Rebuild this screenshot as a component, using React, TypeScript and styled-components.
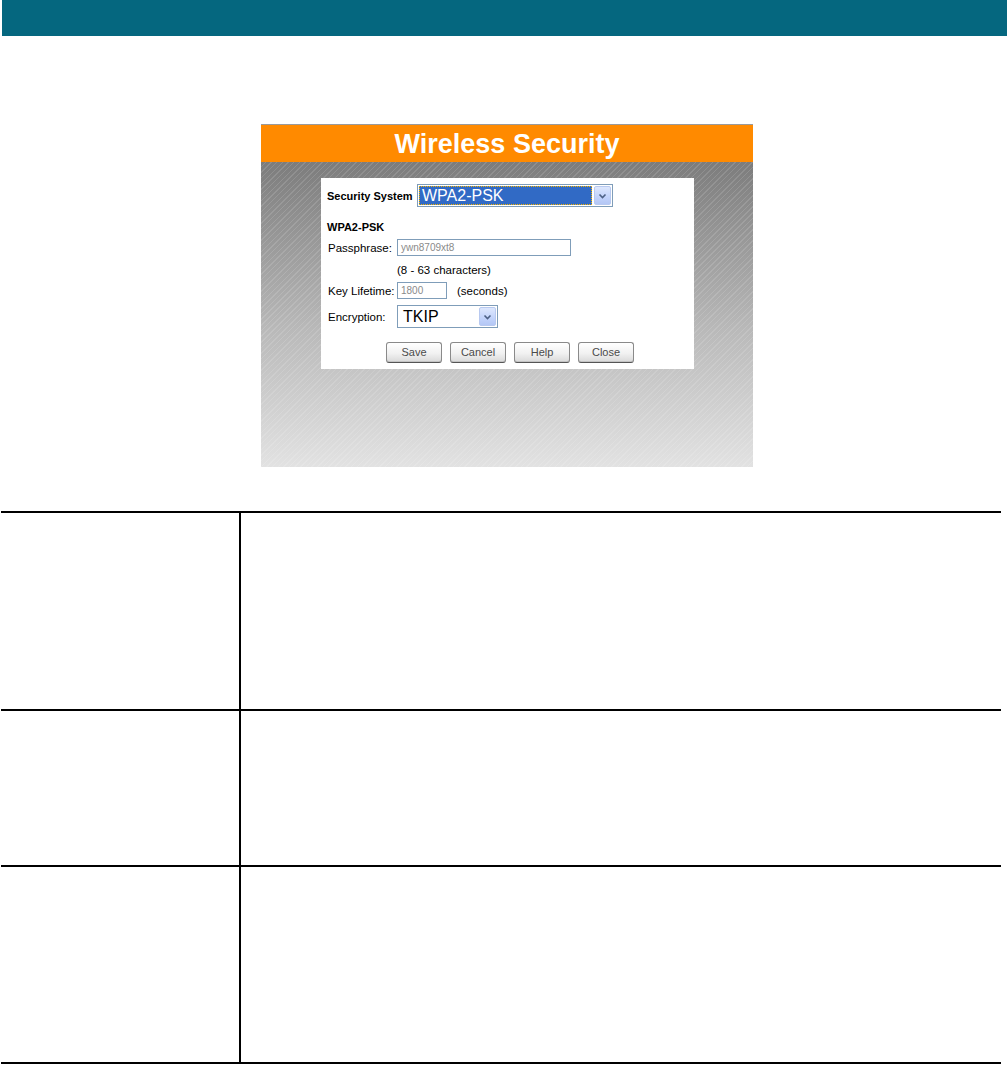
import { styled, createGlobalStyle } from 'styled-components'

const GlobalStyle = createGlobalStyle`
  html, body {
    margin: 0;
    padding: 0;
    background: #ffffff;
  }
  body {
    font-family: "Liberation Sans", Arial, sans-serif;
    color: #000;
  }
`

const Page = styled.div`
  width: 1007px;
  height: 1065px;
  overflow: hidden;
`

const TopBar = styled.div`
  height: 36px;
  margin-left: 2px;
  background: #05677f;
`

const FigureArea = styled.div`
  display: flex;
  justify-content: center;
  padding: 88px 0 44px 7px;
`

const Shot = styled.div`
  width: 492px;
  height: 343px;
  display: flex;
  flex-direction: column;
`

const Banner = styled.div`
  height: 37px;
  border-top: 1px solid #9a9a9a;
  background: #ff8a00;
  color: #fff;
  font-weight: bold;
  font-size: 27px;
  line-height: 39px;
  text-align: center;
`

const ShotBody = styled.div`
  flex: 1;
  padding: 16px 0 0 60px;
  background:
    repeating-linear-gradient(
      135deg,
      rgba(255, 255, 255, 0) 0px,
      rgba(255, 255, 255, 0) 3px,
      rgba(255, 255, 255, 0.13) 3px,
      rgba(255, 255, 255, 0.13) 4px
    ),
    linear-gradient(180deg, #7c7c7c 0%, #b9b9b9 55%, #e2e2e2 100%);
`

const Panel = styled.div`
  width: 361px;
  height: 179px;
  padding: 6px;
  background: #fff;
  display: flex;
  flex-direction: column;
  font-size: 11.5px;
`

const SystemRow = styled.div`
  display: flex;
  align-items: center;
  height: 23px;
`

const BoldLabel = styled.div`
  font-weight: bold;
  font-size: 11px;
  width: 90px;
`

const SectionTitle = styled.div`
  margin-top: 14px;
  height: 12px;
  line-height: 12px;
  font-weight: bold;
  font-size: 11px;
`

const FieldRow = styled.div<{ $top: number; $h: number }>`
  display: flex;
  align-items: center;
  margin-top: ${({ $top }) => $top}px;
  height: ${({ $h }) => $h}px;
  padding-left: 1px;
`

const Label = styled.div`
  width: 69px;
`

const TextBox = styled.div<{ $w: number }>`
  box-sizing: border-box;
  width: ${({ $w }) => $w}px;
  height: 17px;
  border: 1px solid #7f9db9;
  padding: 0 3px;
  font-size: 10px;
  line-height: 15px;
  color: #8a8a8a;
`

const Note = styled.div`
  margin-left: 10px;
`

const CharsNote = styled.div`
  margin-top: 7px;
  height: 14px;
  line-height: 14px;
  padding-left: 70px;
`

const SelectBox = styled.div<{ $w: number }>`
  box-sizing: border-box;
  width: ${({ $w }) => $w}px;
  height: 23px;
  border: 1px solid #7f9db9;
  padding: 1px;
  display: flex;
  background: #fff;
`

const SelectValue = styled.div<{ $active?: boolean }>`
  flex: 1;
  margin-right: 2px;
  padding-left: ${({ $active }) => ($active ? 3 : 4)}px;
  font-size: 16px;
  line-height: 19px;
  color: ${({ $active }) => ($active ? '#fff' : '#000')};
  background: ${({ $active }) => ($active ? '#316ac5' : 'transparent')};
  outline: ${({ $active }) => ($active ? '1px dotted #f5b400' : 'none')};
  outline-offset: -1px;
`

const DropButton = styled.div`
  box-sizing: border-box;
  width: 17px;
  height: 19px;
  border: 1px solid #b8c9f0;
  border-radius: 2px;
  background: linear-gradient(180deg, #dde7fd 0%, #c2d3fb 60%, #b4c7f5 100%);
  display: flex;
  align-items: center;
  justify-content: center;
`

const ButtonRow = styled.div`
  display: flex;
  gap: 8px;
  margin-top: 14px;
  padding-left: 59px;
`

const PlainButton = styled.div`
  box-sizing: border-box;
  width: 56px;
  height: 21px;
  border: 1px solid #8a8a8a;
  border-bottom-color: #555;
  border-radius: 3px;
  background: linear-gradient(180deg, #ffffff 0%, #f1f1f1 55%, #d9d9d9 100%);
  box-shadow: inset 0 -1px 0 #c4c4c4;
  font-size: 11px;
  line-height: 19px;
  text-align: center;
  color: #4a4a4a;
`

const InfoTable = styled.div`
  width: 1000px;
  margin-left: 1px;
  border-top: 2px solid #000;
`

const InfoRow = styled.div<{ $h: number }>`
  display: grid;
  grid-template-columns: 240px 1fr;
  height: ${({ $h }) => $h}px;
  border-bottom: 2px solid #000;
`

const TermCell = styled.div`
  border-right: 2px solid #000;
`

const DescCell = styled.div``

function Chevron() {
  return (
    <svg width="9" height="6" viewBox="0 0 9 6">
      <path d="M1.5 1.5 L4.5 4.5 L7.5 1.5" fill="none" stroke="#4d6185" strokeWidth="1.6" />
    </svg>
  )
}

function Dropdown({ value, width, active }: { value: string; width: number; active?: boolean }) {
  return (
    <SelectBox $w={width}>
      <SelectValue $active={active}>{value}</SelectValue>
      <DropButton>
        <Chevron />
      </DropButton>
    </SelectBox>
  )
}

const rows = [196, 154, 195]

export default function App() {
  return (
    <Page>
      <GlobalStyle />
      <TopBar />

      <FigureArea>
        <Shot>
          <Banner>Wireless Security</Banner>
          <ShotBody>
            <Panel>
              <SystemRow>
                <BoldLabel>Security System</BoldLabel>
                <Dropdown value="WPA2-PSK" width={196} active />
              </SystemRow>

              <SectionTitle>WPA2-PSK</SectionTitle>

              <FieldRow $top={6} $h={17}>
                <Label>Passphrase:</Label>
                <TextBox $w={174}>ywn8709xt8</TextBox>
              </FieldRow>

              <CharsNote>(8 - 63 characters)</CharsNote>

              <FieldRow $top={5} $h={17}>
                <Label>Key Lifetime:</Label>
                <TextBox $w={50}>1800</TextBox>
                <Note>(seconds)</Note>
              </FieldRow>

              <FieldRow $top={6} $h={23}>
                <Label>Encryption:</Label>
                <Dropdown value="TKIP" width={101} />
              </FieldRow>

              <ButtonRow>
                <PlainButton>Save</PlainButton>
                <PlainButton>Cancel</PlainButton>
                <PlainButton>Help</PlainButton>
                <PlainButton>Close</PlainButton>
              </ButtonRow>
            </Panel>
          </ShotBody>
        </Shot>
      </FigureArea>

      <InfoTable>
        {rows.map((h, i) => (
          <InfoRow key={i} $h={h}>
            <TermCell />
            <DescCell />
          </InfoRow>
        ))}
      </InfoTable>
    </Page>
  )
}
